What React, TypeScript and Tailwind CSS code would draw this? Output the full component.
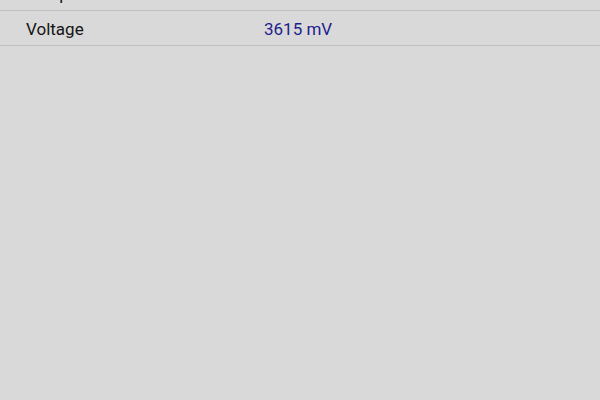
const rows = [
    { label: 'Temperature', value: '35.0 °C' },
    { label: 'Voltage', value: '3615 mV' },
];

export default function App() {
    return (
        <div className="w-[600px] h-[400px] overflow-hidden bg-[#d9d9d9] font-['Roboto',sans-serif]">
            <div className="-mt-[24px]">
                {rows.map((row) => (
                    <div key={row.label} className="flex items-center h-[35px] pt-[4px] border-b border-[#c0c0c0]">
                        <span className="w-[264px] pl-[26px] text-[17px] text-[#141414]">{row.label}</span>
                        <span className="text-[17px] text-[#1e1e8c]">{row.value}</span>
                    </div>
                ))}
            </div>
        </div>
    );
}
